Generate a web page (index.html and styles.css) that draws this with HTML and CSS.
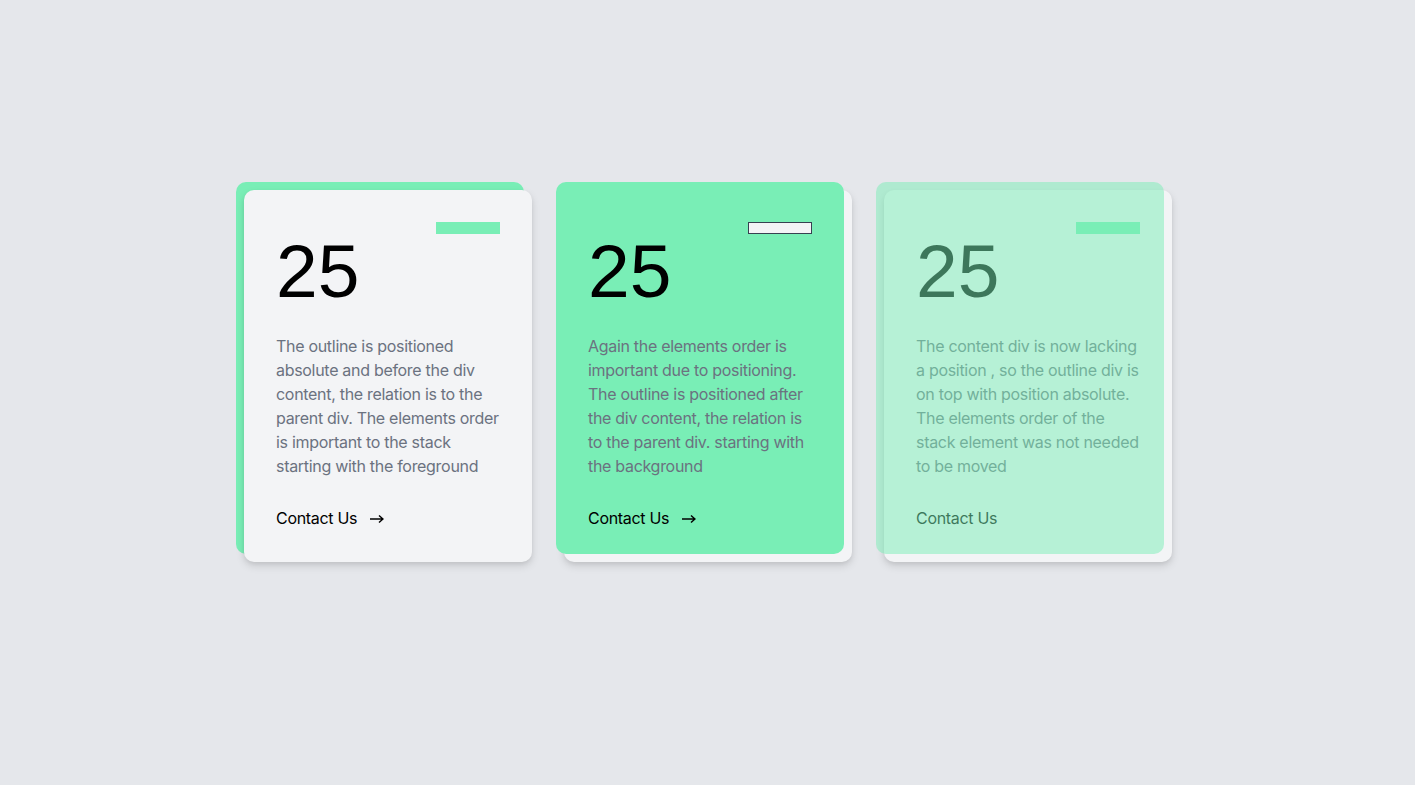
FILE: index.html
```html
<!DOCTYPE html>
<html lang="en">
<head>
<meta charset="utf-8">
<title>Stacked cards</title>
<link rel="stylesheet" href="styles.css">
</head>
<body>
<main class="page">
  <div class="cards">
    <div class="card card-one">
      <div class="outline"></div>
      <div class="content">
        <div class="bar"></div>
        <div class="number">25</div>
        <p class="text">The outline is positioned absolute and before the div content, the relation is to the parent div. The elements order is important to the stack starting with the foreground</p>
        <a class="link" href="#">Contact Us<svg class="arrow" width="14" height="10" viewBox="0 0 14 10"><path d="M0 5H13M9 1.5L13 5L9 8.5" fill="none" stroke="#000" stroke-width="1.5"/></svg></a>
      </div>
    </div>

    <div class="card card-two">
      <div class="content">
        <div class="bar"></div>
        <div class="number">25</div>
        <p class="text">Again the elements order is important due to positioning. The outline is positioned after the div content, the relation is to the parent div. starting with the background</p>
        <a class="link" href="#">Contact Us<svg class="arrow" width="14" height="10" viewBox="0 0 14 10"><path d="M0 5H13M9 1.5L13 5L9 8.5" fill="none" stroke="#000" stroke-width="1.5"/></svg></a>
      </div>
      <div class="outline"></div>
    </div>

    <div class="card card-three">
      <div class="content">
        <div class="bar"></div>
        <div class="number">25</div>
        <p class="text">The content div is now lacking a position , so the outline div is on top with position absolute. The elements order of the stack element was not needed to be moved</p>
        <a class="link" href="#">Contact Us</a>
      </div>
      <div class="outline"></div>
    </div>
  </div>
</main>
</body>
</html>
```

FILE: styles.css
```css
* { box-sizing: border-box; }
html, body { margin: 0; padding: 0; }
body {
  background: #e5e7eb;
  font-family: Inter, "Noto Sans", sans-serif;
  width: 1415px;
  height: 785px;
  overflow: hidden;
}
.page {
  padding: 182px 0 0 236px;
}
.cards {
  display: flex;
  gap: 32px;
}
.card {
  position: relative;
  width: 288px;
  height: 372px;
  flex-shrink: 0;
}
.content {
  width: 288px;
  height: 372px;
  border-radius: 10px;
  padding: 32px;
  display: flex;
  flex-direction: column;
}
.content > * { flex-shrink: 0; }
.outline {
  width: 288px;
  height: 372px;
  border-radius: 10px;
  background: #79eeb6;
}
.bar {
  align-self: flex-end;
  width: 64px;
  height: 12px;
  background: #79eeb6;
}
.number {
  font-family: "Liberation Sans", Arial, sans-serif;
  font-size: 75px;
  line-height: 75px;
  color: #000;
}
.text {
  margin: 25px 0 0;
  font-size: 16px;
  line-height: 24px;
  letter-spacing: -0.3px;
  color: #6b7280;
}
.link {
  display: flex;
  align-items: center;
  margin-top: 28px;
  font-size: 16px;
  line-height: 24px;
  letter-spacing: -0.3px;
  color: #000;
  text-decoration: none;
}
.arrow {
  margin-left: 13px;
  margin-top: 1px;
}

/* card one: outline behind, content shifted over it */
.card-one .outline { position: absolute; top: 0; left: 0; }
.card-one .content {
  position: relative;
  left: 8px;
  top: 8px;
  background: #f3f4f6;
  box-shadow: 0 4px 8px rgba(0,0,0,0.12), 0 2px 4px rgba(0,0,0,0.06);
}

/* card two: content is green, outline below */
.card-two .content {
  position: relative;
  z-index: 1;
  padding-top: 40px;
  background: #79eeb6;
}
.card-two .outline {
  position: absolute;
  top: 8px;
  left: 8px;
  background: #f3f4f6;
  box-shadow: 0 4px 8px rgba(0,0,0,0.12), 0 2px 4px rgba(0,0,0,0.06);
}
.card-two .bar {
  background: #f3f4f6;
  border: 1px solid #374151;
}

/* card three: content shifted, translucent outline on top */
.card-three .content {
  margin: 8px 0 0 8px;
  background: #f3f4f6;
  box-shadow: 0 4px 8px rgba(0,0,0,0.12), 0 2px 4px rgba(0,0,0,0.06);
}
.card-three .outline {
  position: absolute;
  top: 0;
  left: 0;
  opacity: 0.5;
}
```
